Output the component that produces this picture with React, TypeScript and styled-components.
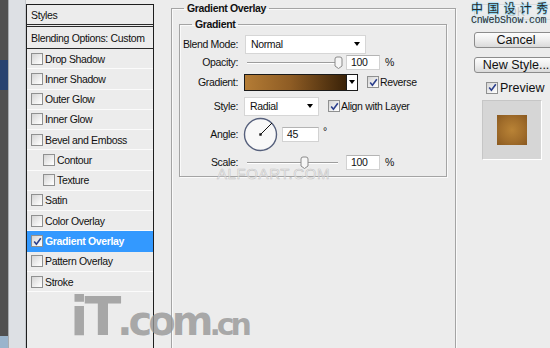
import React from "react";
import styled, { createGlobalStyle } from "styled-components";

const GlobalStyle = createGlobalStyle`
  html, body {
    margin: 0;
    padding: 0;
    background: #ececec;
  }
  body {
    font-family: "Liberation Sans", Arial, sans-serif;
  }
`;

const Page = styled.div`
  position: relative;
  display: flex;
  width: 550px;
  height: 348px;
  overflow: hidden;

  background: #ececec;
  color: #111;
  font-size: 10.5px;
  letter-spacing: -0.35px;
`;

const Edge = styled.div`
  display: flex;
  flex: none;
  width: 26px;
`;
const DarkStrip = styled.div`
  width: 8px;
  background: linear-gradient(to bottom, #505050 0, #505050 60px, #27426f 60px, #27426f 90px, #505050 90px, #505050 336px, #9ab4cc 336px);
`;
const LightStrip = styled.div`
  flex: 1;
  border-left: 1px solid #a8acb0;
  border-right: 1px solid #c4c8cc;
  background: #dde0e4;
`;

const StylesPanel = styled.div`
  flex: none;
  box-sizing: border-box;
  width: 128px;
  height: 400px;
  margin-top: 4px;

  border: 1px solid #1e1e1e;
  border-bottom: none;
`;
const PanelHead = styled.div<{ $double?: boolean }>`
  display: flex;
  align-items: center;
  box-sizing: border-box;
  height: 22px;
  padding-left: 4px;

  border-bottom: ${p => (p.$double ? "3px double #2a2a2a" : "1px solid #2a2a2a")};
`;
const StyleRow = styled.div<{ $active?: boolean; $sub?: boolean }>`
  display: flex;
  align-items: center;
  gap: 2px;
  box-sizing: border-box;
  height: 20.27px;
  padding-left: ${p => (p.$sub ? 16 : 4)}px;

  background: ${p => (p.$active ? "#3399ff" : "transparent")};
  border-bottom: 1px solid ${p => (p.$active ? "#3399ff" : "#fbfbfb")};
  color: ${p => (p.$active ? "#fff" : "#111")};
  font-weight: ${p => (p.$active ? 700 : 400)};
`;

const Box = styled.span`
  flex: none;
  display: inline-flex;
  align-items: center;
  justify-content: center;
  box-sizing: border-box;
  width: 12px;
  height: 12px;

  background: linear-gradient(135deg, #d4d4d4, #f4f4f4 70%, #fff);
  border: 1px solid #8f9090;
`;

const Check: React.FC<{ on?: boolean }> = ({ on }) => (
  <Box>
    {on && (
      <svg width="9" height="9" viewBox="0 0 9 9">
        <path d="M1.2 4.6 L3.4 7.2 L7.8 1.2" fill="none" stroke="#2b3f8c" strokeWidth="1.6" />
      </svg>
    )}
  </Box>
);

const Main = styled.div`
  flex: none;
  width: 285px;
  margin-left: 17px;
`;
const Group = styled.fieldset<{ $w: number; $h: number; $mt: number; $ml: number }>`
  box-sizing: border-box;
  width: ${p => p.$w}px;
  height: ${p => p.$h}px;
  min-width: 0;
  margin: ${p => p.$mt}px 0 0 ${p => p.$ml}px;
  padding: 0;

  border: 1px solid #a4a4a4;
  box-shadow: inset 1px 1px 0 #fafafa, 1px 1px 0 #fafafa;
`;
const Legend = styled.legend`
  margin-left: 12px;
  padding: 0 3px;

  font-weight: 700;
  line-height: 12px;
`;
const Row = styled.div<{ $h: number; $mt: number }>`
  display: flex;
  align-items: center;
  height: ${p => p.$h}px;
  margin-top: ${p => p.$mt}px;
`;
const Label = styled.span`
  flex: none;
  width: 58px;
  margin-right: 6px;

  text-align: right;
`;
const Select = styled.div<{ $w: number }>`
  display: flex;
  align-items: center;
  justify-content: space-between;
  box-sizing: border-box;
  width: ${p => p.$w}px;
  height: 19px;
  padding: 0 5px;

  background: #fff;
  border: 1px solid #d6d6d6;
`;
const Arrow = styled.span`
  width: 0;
  height: 0;

  border-left: 3.5px solid transparent;
  border-right: 3.5px solid transparent;
  border-top: 4px solid #000;
`;
const Slider = styled.div`
  position: relative;
  flex: none;
  width: 96px;
  height: 14px;
  margin: 0 3px 0 3px;
`;
const Track = styled.div`
  position: absolute;
  top: 7px;
  left: 0;
  width: 91px;
  height: 1px;

  background: #9d9d9d;
  box-shadow: 0 1px 0 #fff;
`;
const ThumbSvg = styled.svg`
  position: absolute;
  top: 1px;
`;
const Thumb: React.FC<{ x: number }> = ({ x }) => (
  <ThumbSvg width="9" height="13" viewBox="0 0 9 13" style={{ left: x }}>
    <path d="M1 3 Q1 1 3 1 L6 1 Q8 1 8 3 L8 10 L4.5 12.5 L1 10 Z" fill="#f6f6f6" stroke="#8a8a8a" />
  </ThumbSvg>
);
const NumField = styled.div<{ $w: number }>`
  display: flex;
  align-items: center;
  box-sizing: border-box;
  width: ${p => p.$w}px;
  height: 15px;
  padding-left: 4px;

  background: #fff;
  border: 1px solid #d2d2d2;
  border-top-color: #b4b4b4;
`;
const Unit = styled.span<{ $ml: number; $up?: boolean }>`
  margin-left: ${p => p.$ml}px;
  align-self: ${p => (p.$up ? "flex-start" : "center")};
  margin-top: ${p => (p.$up ? 8 : 0)}px;
`;
const Swatch = styled.div`
  box-sizing: border-box;
  width: 103px;
  height: 17px;

  background: linear-gradient(to right, #b47c35, #8e5c24 45%, #3a2208);
  border: 1px solid #1a1a1a;
`;
const SwatchDrop = styled.div`
  display: flex;
  align-items: center;
  justify-content: center;
  box-sizing: border-box;
  width: 11px;
  height: 17px;

  background: #fff;
  border: 1px solid #1a1a1a;
  border-left: none;
`;
const CheckLabel = styled.span<{ $ml: number }>`
  display: flex;
  align-items: center;
  gap: 1px;
  margin-left: ${p => p.$ml}px;
`;
const Dial = styled.svg`
  flex: none;
  margin-left: -1px;
`;

const Side = styled.div`
  position: relative;
  display: flex;
  flex: none;
  flex-direction: column;
  width: 78px;
  margin-left: 16px;

  font-size: 12.5px;
  letter-spacing: 0;
`;
const Button = styled.div<{ $mt: number }>`
  display: flex;
  flex: none;
  align-items: center;
  justify-content: center;
  box-sizing: border-box;
  width: 84px;
  height: 16px;
  margin: ${p => p.$mt}px 0 0 2px;

  background: linear-gradient(#fdfdfd, #eeeeee 50%, #dadada);
  border: 1px solid #8c8c8c;
  border-radius: 3px;
  color: #111;
`;
const PreviewRow = styled.div`
  display: flex;
  align-items: center;
  gap: 2px;
  height: 13px;
  margin-top: 8px;
  padding-left: 14px;
`;
const Thumbnail = styled.div`
  display: flex;
  align-items: center;
  justify-content: center;
  box-sizing: border-box;
  width: 60px;
  height: 60px;
  margin: 6px 0 0 10px;

  background: #d6d6d6;
  border: 1px solid #c6c6c6;
  border-right-color: #fff;
  border-bottom-color: #fff;
`;
const ThumbSquare = styled.div`
  width: 30px;
  height: 30px;

  background: radial-gradient(circle, #b98336 0, #a26e2b 55%, #8a5920 100%);
`;

// site watermark laid over the OK button
const TopMark = styled.div`
  position: absolute;
  top: 1px;
  left: -3px;
  box-sizing: border-box;
  width: 81px;
  height: 27px;
  padding-left: 2px;

  background: rgba(236, 236, 236, 0.82);
  color: #2a2a2a;
  white-space: nowrap;
`;
const MarkCn = styled.div`
  font-family: "Noto Sans CJK SC", sans-serif;
  font-size: 12px;
  line-height: 14px;
  letter-spacing: 0.3px;
  word-spacing: 1px;
  white-space: pre;
  text-shadow: 0 1px 1px #5cc4ee, 0 -1px 1px #9be0ff;
`;
const MarkEn = styled.div`
  font-family: "Liberation Mono", monospace;
  font-size: 10px;
  line-height: 11px;
  letter-spacing: -0.2px;
  text-shadow: 0 0 2px #9be0ff;
`;

const BigMark = styled.div`
  position: absolute;
  top: 290px;
  left: 70px;

  color: rgba(150, 150, 150, 0.8);
  font-family: "DejaVu Sans", sans-serif;
  font-weight: 700;
  line-height: 54px;
  letter-spacing: -4px;
  white-space: nowrap;
`;
const MarkPart = styled.span<{ $size: number }>`
  font-size: ${p => p.$size}px;
`;
const SiteMark = styled.div`
  position: absolute;
  top: 165px;
  left: 217px;

  color: rgba(250, 250, 250, 0.6);
  font-family: "Liberation Sans", sans-serif;
  font-size: 15px;
  letter-spacing: 0.6px;
  -webkit-text-stroke: 0.6px rgba(175, 175, 175, 0.7);
`;

const styleItems = [
  { name: "Drop Shadow" },
  { name: "Inner Shadow" },
  { name: "Outer Glow" },
  { name: "Inner Glow" },
  { name: "Bevel and Emboss" },
  { name: "Contour", sub: true },
  { name: "Texture", sub: true },
  { name: "Satin" },
  { name: "Color Overlay" },
  { name: "Gradient Overlay", active: true },
  { name: "Pattern Overlay" },
  { name: "Stroke" },
];

export default function App() {
  return (
    <Page>
      <GlobalStyle />
      <Edge>
        <DarkStrip />
        <LightStrip />
      </Edge>

      <StylesPanel>
        <PanelHead $double>Styles</PanelHead>
        <PanelHead>Blending Options: Custom</PanelHead>
        {styleItems.map(item => (
          <StyleRow key={item.name} $active={item.active} $sub={item.sub}>
            <Check on={item.active} />
            {item.name}
          </StyleRow>
        ))}
      </StylesPanel>

      <Main>
        <Group $w={285} $h={380} $mt={2} $ml={0}>
          <Legend>Gradient Overlay</Legend>
          <Group $w={268} $h={159} $mt={4} $ml={7}>
            <Legend>Gradient</Legend>
            <Row $h={20} $mt={4}>
              <Label>Blend Mode:</Label>
              <Select $w={121} style={{ marginLeft: 1 }}>
                Normal
                <Arrow />
              </Select>
            </Row>
            <Row $h={16} $mt={0}>
              <Label>Opacity:</Label>
              <Slider>
                <Track />
                <Thumb x={87} />
              </Slider>
              <NumField $w={34}>100</NumField>
              <Unit $ml={5}>%</Unit>
            </Row>
            <Row $h={20} $mt={2}>
              <Label>Gradient:</Label>
              <Swatch />
              <SwatchDrop>
                <Arrow />
              </SwatchDrop>
              <CheckLabel $ml={9}>
                <Check on />
                Reverse
              </CheckLabel>
            </Row>
            <Row $h={20} $mt={4}>
              <Label>Style:</Label>
              <Select $w={75}>
                Radial
                <Arrow />
              </Select>
              <CheckLabel $ml={9}>
                <Check on />
                Align with Layer
              </CheckLabel>
            </Row>
            <Row $h={34} $mt={1}>
              <Label>Angle:</Label>
              <Dial width="35" height="35" viewBox="0 0 35 35">
                <circle cx="17.5" cy="17.5" r="16" fill="#f8f8f8" stroke="#56607c" strokeWidth="1.4" />
                <line x1="17.5" y1="17.5" x2="29" y2="6" stroke="#111" strokeWidth="1" />
                <rect x="16.3" y="16.3" width="2.4" height="2.4" fill="#111" />
              </Dial>
              <NumField $w={37} style={{ marginLeft: 4 }}>45</NumField>
              <Unit $ml={4} $up>°</Unit>
            </Row>
            <Row $h={14} $mt={4}>
              <Label>Scale:</Label>
              <Slider>
                <Track />
                <Thumb x={53} />
              </Slider>
              <NumField $w={34}>100</NumField>
              <Unit $ml={5}>%</Unit>
            </Row>
          </Group>
        </Group>
      </Main>

      <Side>
        <Button $mt={4}>OK</Button>
        <Button $mt={12}>Cancel</Button>
        <Button $mt={9}>New Style...</Button>
        <PreviewRow>
          <Check on />
          Preview
        </PreviewRow>
        <Thumbnail>
          <ThumbSquare />
        </Thumbnail>
        <TopMark>
          <MarkCn>中 国 设 计 秀</MarkCn>
          <MarkEn>CnWebShow.com</MarkEn>
        </TopMark>
      </Side>

      <SiteMark>ALFOART.COM</SiteMark>
      <BigMark>
        <MarkPart $size={54}>iT</MarkPart>
        <MarkPart $size={40}>.com</MarkPart>
        <MarkPart $size={30}>.cn</MarkPart>
      </BigMark>
    </Page>
  );
}
